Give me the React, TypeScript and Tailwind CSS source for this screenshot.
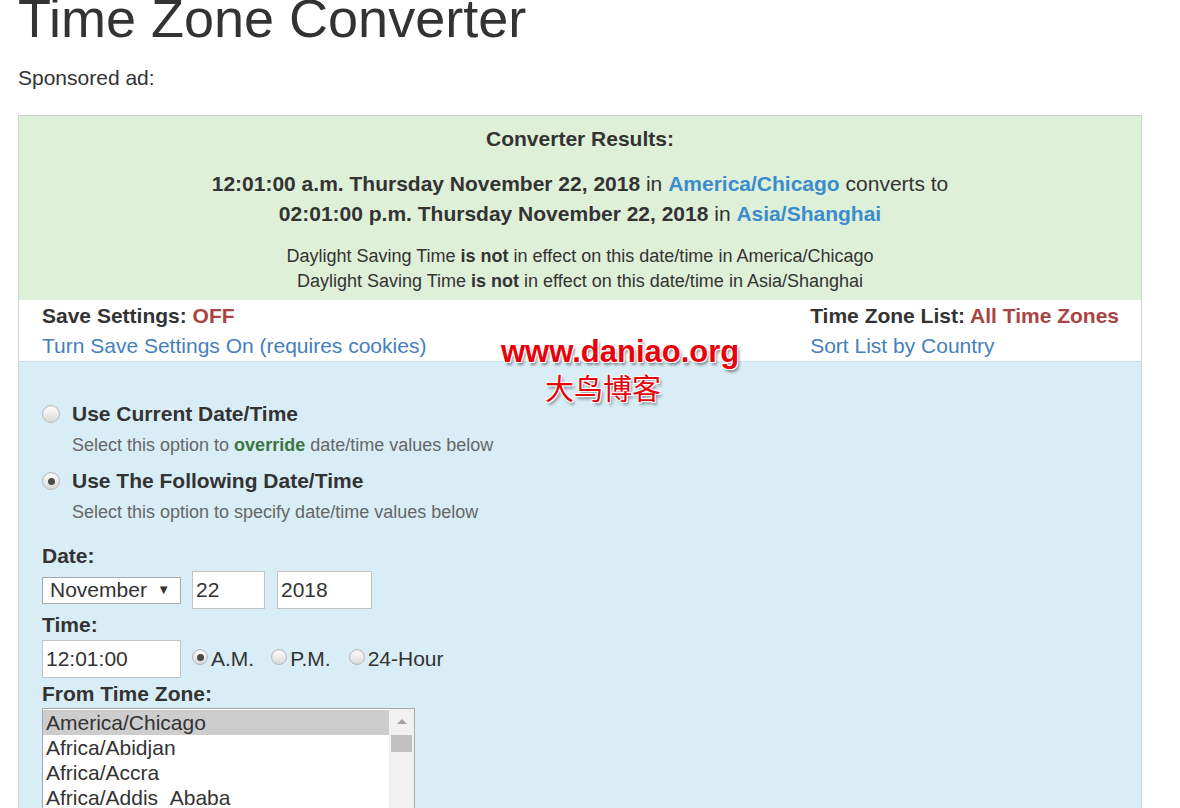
import React from 'react';

const Radio: React.FC<{ checked?: boolean; size?: string }> = ({ checked, size = 'w-[18px] h-[18px]' }) => (
  <span
    className={`${size} shrink-0 rounded-full border border-[#b9b9b9] bg-gradient-to-b from-[#ffffff] to-[#d9d9d9] flex items-center justify-center shadow-[inset_0_1px_1px_rgba(0,0,0,0.08)]`}
  >
    {checked && <span className="w-[7px] h-[7px] rounded-full bg-[#4a4a4a]" />}
  </span>
);

const zones = [
  'America/Chicago',
  'Africa/Abidjan',
  'Africa/Accra',
  'Africa/Addis_Ababa',
  'Africa/Algiers',
  'Africa/Asmara',
];

const App: React.FC = () => {
  return (
    <div className="relative h-[808px] overflow-hidden bg-white text-[#333] font-['Liberation_Sans',Arial,sans-serif]">
      <div className="px-[18px]">
        <h1 className="-mt-[11px] text-[54px] leading-[59px] font-normal">Time Zone Converter</h1>
        <p className="mt-[15px] text-[21px] leading-[30px]">Sponsored ad:</p>

        <div className="mt-[22px] w-[1124px] border border-[#ccd5cb]">
          {/* results */}
          <div className="bg-[#dff0d8] pt-[8px] pb-[6px] text-center text-[21px] leading-[30px]">
            <div className="font-bold">Converter Results:</div>
            <div className="mt-[15px]">
              <div>
                <b>12:01:00 a.m. Thursday November 22, 2018</b> in{' '}
                <b className="text-[#3a8ccd]">America/Chicago</b> converts to
              </div>
              <div>
                <b>02:01:00 p.m. Thursday November 22, 2018</b> in{' '}
                <b className="text-[#3a8ccd]">Asia/Shanghai</b>
              </div>
            </div>
            <div className="mt-[15px] text-[18px] leading-[25px]">
              <div>
                Daylight Saving Time <b>is not</b> in effect on this date/time in America/Chicago
              </div>
              <div>
                Daylight Saving Time <b>is not</b> in effect on this date/time in Asia/Shanghai
              </div>
            </div>
          </div>

          {/* settings */}
          <div className="flex h-[61px] justify-between bg-white pl-[23px] pr-[22px] pt-[1px] text-[21px] leading-[30px]">
            <div>
              <div className="font-bold">
                Save Settings: <span className="text-[#a94442]">OFF</span>
              </div>
              <div className="text-[#4580bb]">Turn Save Settings On (requires cookies)</div>
            </div>
            <div>
              <div className="font-bold">
                Time Zone List: <span className="text-[#a94442]">All Time Zones</span>
              </div>
              <div className="text-[#4580bb]">Sort List by Country</div>
            </div>
          </div>

          {/* form */}
          <div className="h-[500px] border-t border-[#c4e3ef] bg-[#d9edf7] pl-[23px] pt-[37px] text-[21px] leading-[30px]">
            <div className="flex items-center gap-[12px]">
              <Radio />
              <span className="font-bold">Use Current Date/Time</span>
            </div>
            <div className="mt-[3px] pl-[30px] text-[18px] leading-[26px] text-[#666]">
              Select this option to <b className="text-[#3c763d]">override</b> date/time values below
            </div>
            <div className="mt-[8px] flex items-center gap-[12px]">
              <Radio checked />
              <span className="font-bold">Use The Following Date/Time</span>
            </div>
            <div className="mt-[3px] pl-[30px] text-[18px] leading-[26px] text-[#666]">
              Select this option to specify date/time values below
            </div>

            <div className="mt-[16px] font-bold">Date:</div>
            <div className="flex h-[38px] items-center">
              <div className="flex h-[27px] w-[139px] items-center justify-between border border-[#a9a9a9] bg-white pl-[7px] pr-[10px]">
                <span>November</span>
                <span className="text-[13px]">▼</span>
              </div>
              <div className="ml-[11px] flex h-[38px] w-[73px] items-center border border-[#c3c3c3] bg-white pl-[3px]">22</div>
              <div className="ml-[12px] flex h-[38px] w-[95px] items-center border border-[#c3c3c3] bg-white pl-[3px]">2018</div>
            </div>

            <div className="mt-[1px] font-bold">Time:</div>
            <div className="flex h-[38px] items-center">
              <div className="flex h-[38px] w-[139px] items-center border border-[#c3c3c3] bg-white pl-[3px]">12:01:00</div>
              <div className="ml-[11px] flex items-center">
                <span className="-mt-[4px] mr-[3px]"><Radio checked size="w-[16px] h-[16px]" /></span>
                A.M.
              </div>
              <div className="ml-[17px] flex items-center">
                <span className="-mt-[4px] mr-[3px]"><Radio size="w-[16px] h-[16px]" /></span>
                P.M.
              </div>
              <div className="ml-[18px] flex items-center">
                <span className="-mt-[4px] mr-[3px]"><Radio size="w-[16px] h-[16px]" /></span>
                24-Hour
              </div>
            </div>

            <div className="mt-[2px] font-bold leading-[28px]">From Time Zone:</div>
            <div className="flex w-[373px] border border-[#a9a9a9] bg-white">
              <div className="flex-1 pt-[1px]">
                {zones.map((z, i) => (
                  <div
                    key={z}
                    className={`h-[25px] pl-[3px] leading-[25px] ${i === 0 ? 'bg-[#cdcdcd]' : ''}`}
                  >
                    {z}
                  </div>
                ))}
              </div>
              <div className="relative w-[25px] bg-[#f1f1f1]">
                <div className="mx-auto mt-[10px] h-0 w-0 border-x-[5px] border-b-[5px] border-x-transparent border-b-[#a3a3a3]" />
                <div className="absolute left-[2px] top-[26px] h-[17px] w-[21px] bg-[#c1c1c1]" />
              </div>
            </div>
          </div>
        </div>
      </div>

      {/* watermark */}
      <div className="absolute left-[501px] top-[334px] text-[31px] font-bold leading-[36px] text-[#e8000b] [text-shadow:1px_1px_0_#fff,-1px_-1px_0_#fff,1px_-1px_0_#fff,-1px_1px_0_#fff,2px_3px_3px_rgba(0,0,0,0.45)]">
        www.daniao.org
      </div>
      <div className="absolute left-[545px] top-[370px] font-['Noto_Sans_CJK_SC',sans-serif] text-[29px] leading-[34px] text-[#e8000b] [text-shadow:1px_1px_0_#fff,-1px_-1px_0_#fff,1px_-1px_0_#fff,-1px_1px_0_#fff,2px_3px_3px_rgba(0,0,0,0.45)]">
        大鸟博客
      </div>
    </div>
  );
};

export default App;
